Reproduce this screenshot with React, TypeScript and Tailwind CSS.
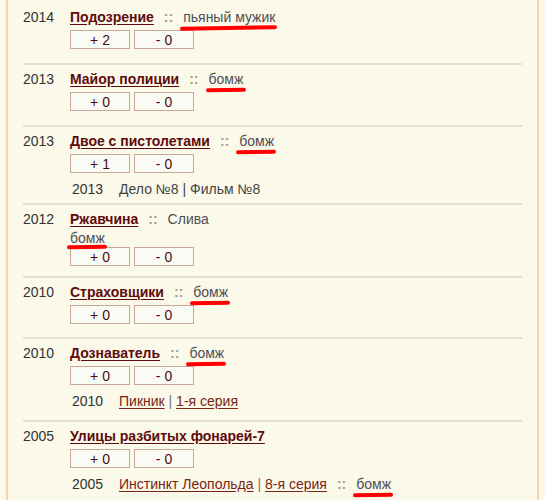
import React from "react";

type Sub = { year: string; parts: { text: string; link?: boolean }[]; role?: string };

type Row = {
  year: string;
  title: string;
  role?: string;
  roleBelow?: boolean;
  plus: number;
  minus: number;
  sub?: Sub;
  pb?: string;
};

const rows: Row[] = [
  { year: "2014", title: "Подозрение", role: "пьяный мужик", plus: 2, minus: 0 },
  { year: "2013", title: "Майор полиции", role: "бомж", plus: 0, minus: 0 },
  {
    year: "2013",
    title: "Двое с пистолетами",
    role: "бомж",
    plus: 1,
    minus: 0,
    sub: { year: "2013", parts: [{ text: "Дело №8 | Фильм №8" }] },
    pb: "pb-[6px]",
  },
  { year: "2012", title: "Ржавчина", role: "Слива", roleBelow: true, plus: 0, minus: 0, pb: "pb-[10px]" },
  { year: "2010", title: "Страховщики", role: "бомж", plus: 0, minus: 0, pb: "pb-[13px]" },
  {
    year: "2010",
    title: "Дознаватель",
    role: "бомж",
    plus: 0,
    minus: 0,
    sub: { year: "2010", parts: [{ text: "Пикник", link: true }, { text: "1-я серия", link: true }] },
    pb: "pb-[11px]",
  },
  {
    year: "2005",
    title: "Улицы разбитых фонарей-7",
    plus: 0,
    minus: 0,
    sub: {
      year: "2005",
      parts: [{ text: "Инстинкт Леопольда", link: true }, { text: "8-я серия", link: true }],
      role: "бомж",
    },
  },
];

const Marked = ({ children, tight }: { children: React.ReactNode; tight?: boolean }) => (
  <span className="relative inline-block">
    {children}
    <span
      className={`absolute z-10 left-[-3px] right-[-2px] ${tight ? "top-[calc(100%-1px)]" : "top-[calc(100%+1px)]"} h-[4px] rounded-full bg-[#ff0000] -rotate-[1deg]`}
    />
  </span>
);

const Sep = () => <span className="mx-[10px] font-bold text-[#9d9d94]">::</span>;

const Vote = ({ label }: { label: string }) => (
  <div className="w-[60px] h-[19px] border border-[#c9a898] bg-[#fbfbf6] flex items-center justify-center text-[#4a0c0c] leading-none">
    {label}
  </div>
);

const Entry = ({ row, first }: { row: Row; first: boolean }) => (
  <div
    className={`flex ${first ? "pt-[9px]" : "pt-[6px] border-t-2 border-[#e1e0d2]"} ${row.pb ?? "pb-[14px]"}`}
  >
    <div className="w-[47px] shrink-0 leading-[16px] text-[#333]">{row.year}</div>
    <div className="flex flex-col">
      <div className="leading-[16px] whitespace-nowrap">
        <a className="font-bold text-[#5e0b0b] underline underline-offset-2">{row.title}</a>
        {row.role && !row.roleBelow && (
          <>
            <Sep />
            <Marked>
              <span className="text-[#4e4e56]">{row.role}</span>
            </Marked>
          </>
        )}
        {row.roleBelow && (
          <>
            <Sep />
            <span className="text-[#4e4e56]">{row.role}</span>
          </>
        )}
      </div>
      {row.roleBelow && (
        <div className="leading-[16px] mt-[3px]">
          <Marked tight>
            <span className="text-[#4e4e56]">бомж</span>
          </Marked>
        </div>
      )}
      <div className={`flex gap-[4px] ${row.roleBelow ? "mt-[1px]" : "mt-[5px]"}`}>
        <Vote label={`+ ${row.plus}`} />
        <Vote label={`- ${row.minus}`} />
      </div>
      {row.sub && (
        <div className="flex mt-[8px] leading-[16px] pl-[2px] whitespace-nowrap">
          <span className="w-[47px] text-[#333]">{row.sub.year}</span>
          <span className="text-[#444]">
            {row.sub.parts.map((p, i) => (
              <React.Fragment key={i}>
                {i > 0 && <span className="text-[#777]"> | </span>}
                {p.link ? <a className="text-[#7a2412] underline underline-offset-2">{p.text}</a> : p.text}
              </React.Fragment>
            ))}
            {row.sub.role && (
              <>
                <Sep />
                <Marked>
                  <span className="text-[#4e4e56]">{row.sub.role}</span>
                </Marked>
              </>
            )}
          </span>
        </div>
      )}
    </div>
  </div>
);

export default function App() {
  return (
    <div className="h-[500px] overflow-hidden bg-[#faf9ea] pl-[6px] font-['Liberation_Sans',Arial,sans-serif] text-[14px]">
      <div className="w-[533px] min-h-[500px] border-x-2 border-[#f5d5ae] px-[15px]">
        {rows.map((r, i) => (
          <Entry key={i} row={r} first={i === 0} />
        ))}
      </div>
    </div>
  );
}
